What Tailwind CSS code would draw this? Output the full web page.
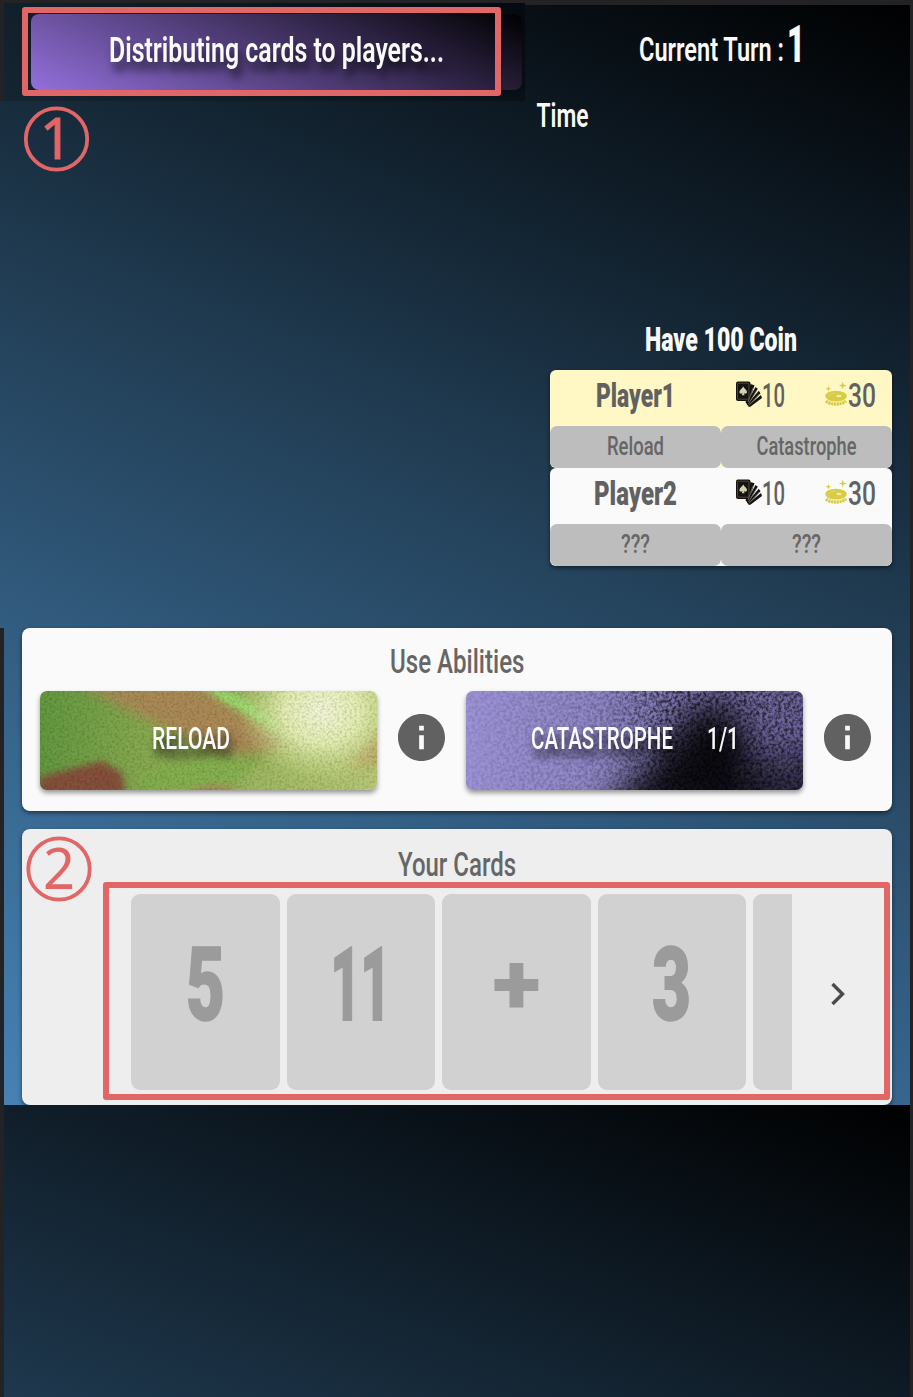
<!DOCTYPE html>
<html lang="en">
<head>
<meta charset="utf-8">
<title>Card Game</title>
<script src="https://cdn.jsdelivr.net/npm/@tailwindcss/browser@4"></script>
</head>
<body class="bg-[#232325] font-['Roboto',sans-serif]">
<svg class="hidden">
  <symbol id="cards" viewBox="0 0 26 26">
    <g fill="#15130f">
      <path d="M14.500 3l4 1.200L12 23.500 9.500 21.500z"/>
      <path d="M19.500 6l2.300 1.700L11.800 24.300 10.500 22.500z"/>
      <path d="M22.800 9.700l1.700 2.500L12.500 25l-1.500-1.500z"/>
      <path d="M25 14l1 3L14 26l-2.500-1z"/>
      <rect x="0" y=".5" width="14.500" height="19.500" rx="2"/>
    </g>
    <path d="M17 7l-5 14M20.600 9.500L12.500 23M23.300 13L13 24.300" stroke="#8d8878" stroke-width=".7" fill="none"/>
    <rect x="1.600" y="2.200" width="11.300" height="16" rx="1" fill="none" stroke="#6d6a60" stroke-width=".6"/>
    <path d="M7.200 5.500c1 2 3.800 3.300 3.800 5.500 0 1.700-2 2.200-3.200 1.100l.8 2.200H5.800l.8-2.200C5.400 13.200 3.400 12.700 3.400 11c0-2.200 2.800-3.500 3.800-5.500z" fill="#d6d0b4"/>
  </symbol>
  <symbol id="coin" viewBox="0 0 24 26">
    <g fill="#d8cb45">
      <path d="M18.500 0l.9 3.200 3.300 1-3.300 1-.9 3.300-.9-3.300-3.300-1 3.300-1z"/>
      <path d="M3.500 4.500l.7 2.300 2.300.7-2.300.7-.7 2.300-.7-2.300L.5 7.500l2.300-.7z"/>
      <ellipse cx="11.500" cy="15.200" rx="11.300" ry="5.600"/>
    </g>
    <path d="M1.200 20.300c4 4.200 16.600 4.200 20.600 0" fill="none" stroke="#d8cb45" stroke-width="3.400" stroke-dasharray="2.300 .6"/>
    <ellipse cx="14.500" cy="15.200" rx="2.800" ry="1.300" fill="#f3eca0"/>
    <path d="M4 15.500c0-2 3.500-3 6.500-3.200" fill="none" stroke="#e9df7c" stroke-width=".7"/>
  </symbol>
  <symbol id="info" viewBox="2 2 20 20">
    <path fill="#616161" d="M12 2C6.480 2 2 6.480 2 12s4.480 10 10 10 10-4.480 10-10S17.520 2 12 2zm1 15h-2v-6h2v6zm0-8h-2V7h2v2z"/>
  </symbol>
</svg>

<main class="relative flex h-[1397px] w-[913px] flex-col overflow-hidden">
  <div class="flex h-[1105px] shrink-0 flex-col bg-[linear-gradient(22deg,#4682b4,#346085_30%,#203b51_58%,#12222f_75%,#000)]">

    <section class="flex h-[628px] shrink-0">
      <div class="w-[525px]">
        <header class="h-[101px] border-t-[3px] border-l-4 border-[#232325] bg-[linear-gradient(30deg,#142532,#0f1c25_40%,#050910)] pt-[11px] pl-[27px]">
          <div class="h-[76px] w-[491px] rounded-[8px] bg-[linear-gradient(25deg,#9370db,#000)] shadow-md">
            <svg width="491" height="76" class="overflow-visible drop-shadow-[4px_9px_4px_rgba(0,0,0,.65)]">
              <text x="78" y="48" font-size="34.500" font-weight="600" fill="#fafafa" textLength="335" lengthAdjust="spacingAndGlyphs">Distributing cards to players...</text>
            </svg>
          </div>
        </header>
      </div>
      <div class="flex grow flex-col border-t-[5px] border-r-[3px] border-[#232325]">
        <svg width="385" height="365" class="shrink-0" fill="#fafafa">
          <text x="114" y="55.500" font-size="33" font-weight="600" textLength="145" lengthAdjust="spacingAndGlyphs">Current Turn :</text>
          <text x="262" y="56.500" font-size="52" font-weight="900" textLength="18" lengthAdjust="spacingAndGlyphs">1</text>
          <text x="11.500" y="122" font-size="33" font-weight="600" textLength="52" lengthAdjust="spacingAndGlyphs">Time</text>
          <text x="120" y="346" font-size="33.500" font-weight="900" textLength="152" lengthAdjust="spacingAndGlyphs">Have 100 Coin</text>
        </svg>
        <div class="ml-[25px] w-[342px] rounded-[6px] shadow-[0_2px_4px_rgba(0,0,0,.5)]">
          <div class="flex h-[98px] flex-col rounded-[6px] bg-[#fff8c4]">
            <div class="flex h-14 items-start">
              <svg width="186" height="56" fill="#616161"><text x="46" y="37" font-size="34" font-weight="900" textLength="79" lengthAdjust="spacingAndGlyphs">Player1</text></svg>
              <svg width="26" height="26" class="mt-[11px]"><use href="#cards"/></svg>
              <svg width="63" height="56" fill="#616161"><text x="0" y="37" font-size="33" font-weight="500" textLength="23" lengthAdjust="spacingAndGlyphs">10</text></svg>
              <svg width="23" height="26" class="mt-[11px]"><use href="#coin"/></svg>
              <svg width="44" height="56" fill="#616161"><text x="0" y="37" font-size="33" font-weight="500" textLength="28" lengthAdjust="spacingAndGlyphs">30</text></svg>
            </div>
            <div class="grid h-[41.500px] grid-cols-2">
              <svg width="171" height="42" class="rounded-[7px] bg-[#bdbdbd]" fill="#666"><text x="57" y="28.500" font-size="25" font-weight="500" textLength="57" lengthAdjust="spacingAndGlyphs">Reload</text></svg>
              <svg width="171" height="42" class="rounded-[7px] bg-[#bdbdbd]" fill="#666"><text x="35.500" y="28.500" font-size="25" font-weight="500" textLength="100" lengthAdjust="spacingAndGlyphs">Catastrophe</text></svg>
            </div>
          </div>
          <div class="flex h-[98px] flex-col rounded-[6px] bg-[#fafafa]">
            <div class="flex h-14 items-start">
              <svg width="186" height="56" fill="#616161"><text x="44" y="37" font-size="34" font-weight="900" textLength="83" lengthAdjust="spacingAndGlyphs">Player2</text></svg>
              <svg width="26" height="26" class="mt-[11px]"><use href="#cards"/></svg>
              <svg width="63" height="56" fill="#616161"><text x="0" y="37" font-size="33" font-weight="500" textLength="23" lengthAdjust="spacingAndGlyphs">10</text></svg>
              <svg width="23" height="26" class="mt-[11px]"><use href="#coin"/></svg>
              <svg width="44" height="56" fill="#616161"><text x="0" y="37" font-size="33" font-weight="500" textLength="28" lengthAdjust="spacingAndGlyphs">30</text></svg>
            </div>
            <div class="grid h-[42px] grid-cols-2">
              <svg width="171" height="42" class="rounded-[7px] bg-[#bdbdbd]" fill="#666"><text x="71" y="28.500" font-size="25" font-weight="500" textLength="29" lengthAdjust="spacingAndGlyphs">???</text></svg>
              <svg width="171" height="42" class="rounded-[7px] bg-[#bdbdbd]" fill="#666"><text x="71" y="28.500" font-size="25" font-weight="500" textLength="29" lengthAdjust="spacingAndGlyphs">???</text></svg>
            </div>
          </div>
        </div>
      </div>
    </section>

    <section class="flex h-[477px] shrink-0 flex-col border-r-[3px] border-l-4 border-[#232325] pl-[18px]">
      <div class="h-[183px] w-[870px] rounded-[8px] bg-[#fafafa] shadow-[0_2px_4px_rgba(0,0,0,.5)]">
        <svg width="870" height="63" fill="#666"><text x="368" y="45" font-size="33" font-weight="500" textLength="134.500" lengthAdjust="spacingAndGlyphs">Use Abilities</text></svg>
        <div class="flex items-start pl-[18px]">
          <svg width="337" height="99" class="rounded-[7px] shadow-[0_3px_5px_rgba(0,0,0,.4)]">
            <defs>
              <linearGradient id="g1"><stop offset="0" stop-color="#62983f"/><stop offset=".35" stop-color="#8cab52"/><stop offset="1" stop-color="#b8c877"/></linearGradient>
              <radialGradient id="g2"><stop offset="0" stop-color="#f3f6d8"/><stop offset=".45" stop-color="#e8f2b8" stop-opacity=".9"/><stop offset="1" stop-color="#c9df88" stop-opacity="0"/></radialGradient>
              <filter id="b6" x="-30%" y="-30%" width="160%" height="160%"><feGaussianBlur stdDeviation="6"/></filter>
              <filter id="b3" x="-30%" y="-30%" width="160%" height="160%"><feGaussianBlur stdDeviation="3.500"/></filter>
              <filter id="grain" x="0" y="0" width="100%" height="100%"><feTurbulence type="fractalNoise" baseFrequency=".4" numOctaves="2" seed="4"/><feColorMatrix values="0 0 0 0 0  0 0 0 0 0  0 0 0 0 0  1.600 0 0 0 -.65"/></filter>
            </defs>
            <rect width="337" height="99" fill="url(#g1)"/>
            <path d="M40-5H165L245 52 205 72 115 32z" fill="#ad8656" opacity=".9" filter="url(#b6)"/>
            <path d="M0 86L62 70 82 82 86 104H-5z" fill="#85503a" filter="url(#b3)"/>
            <path d="M100 85Q160 60 230 62L190 99H100z" fill="#7fb04c" opacity=".7" filter="url(#b6)"/>
            <path d="M145 105Q170 85 200 100z" fill="#a78a58" filter="url(#b3)"/>
            <path d="M310 75Q325 45 345 38V70z" fill="#b99f62" filter="url(#b6)"/>
            <path d="M168-4Q205 8 236 36L215 24 185 8z" fill="#94e66c" stroke="#9add6e" stroke-width="5" filter="url(#b3)"/>
            <ellipse cx="282" cy="20" rx="85" ry="72" fill="url(#g2)"/>
            <rect width="337" height="99" filter="url(#grain)" opacity=".24"/>
            <text x="112" y="58" font-size="31" font-weight="500" fill="#fafafa" textLength="78" lengthAdjust="spacingAndGlyphs" class="drop-shadow-[3px_8px_4px_rgba(0,0,0,.8)]">RELOAD</text>
          </svg>
          <svg width="47" height="47" class="mt-[23px] ml-[21px]"><use href="#info"/></svg>
          <svg width="337" height="99" class="ml-[21px] rounded-[7px] shadow-[0_3px_5px_rgba(0,0,0,.4)]">
            <defs>
              <linearGradient id="p1"><stop offset="0" stop-color="#9c92d6"/><stop offset=".35" stop-color="#9088c8"/><stop offset=".6" stop-color="#8078b4"/><stop offset="1" stop-color="#6c639a"/></linearGradient>
              <filter id="grain2" x="0" y="0" width="100%" height="100%"><feTurbulence type="fractalNoise" baseFrequency=".32" numOctaves="3" seed="9"/><feColorMatrix values="0 0 0 0 0  0 0 0 0 0  0 0 0 0 0  2.600 0 0 0 -.95"/></filter>
              <filter id="b14" filterUnits="userSpaceOnUse" x="-60" y="-80" width="500" height="280"><feGaussianBlur stdDeviation="17"/></filter>
              <linearGradient id="fade"><stop offset="0" stop-color="#fff" stop-opacity=".1"/><stop offset=".4" stop-color="#fff" stop-opacity=".25"/><stop offset=".6" stop-color="#fff" stop-opacity=".7"/><stop offset="1" stop-color="#fff" stop-opacity=".6"/></linearGradient>
              <mask id="m1"><rect width="337" height="99" fill="url(#fade)"/></mask>
            </defs>
            <rect width="337" height="99" fill="url(#p1)"/>
            <path d="M130 125L185 75 228 15 268 15 284 60 300 125z" fill="#000" opacity=".88" filter="url(#b14)"/>
            <path d="M265 130V75L380 60V130z" fill="#0a0718" opacity=".65" filter="url(#b14)"/>
            <g mask="url(#m1)"><rect width="337" height="99" filter="url(#grain2)"/></g>
            <g font-size="31" font-weight="500" fill="#fafafa" class="drop-shadow-[3px_8px_4px_rgba(0,0,0,.8)]">
              <text x="65" y="58" textLength="142" lengthAdjust="spacingAndGlyphs">CATASTROPHE</text>
              <text x="241" y="58" textLength="32" lengthAdjust="spacingAndGlyphs">1/1</text>
            </g>
          </svg>
          <svg width="47" height="47" class="mt-[23px] ml-[21px]"><use href="#info"/></svg>
        </div>
      </div>

      <div class="mt-[18px] h-[276px] w-[870px] rounded-[8px] bg-[#eeeeee] shadow-[0_2px_4px_rgba(0,0,0,.5)]">
        <svg width="870" height="65" fill="#666"><text x="376" y="46.500" font-size="33" font-weight="500" textLength="118" lengthAdjust="spacingAndGlyphs">Your Cards</text></svg>
        <div class="flex items-center pl-[109px]">
          <div class="flex h-[196px] w-[660.500px] gap-[7px] overflow-hidden">
            <svg width="148.500" height="196" class="shrink-0 rounded-[9px] bg-[#d1d1d1]" fill="#9b9b9b" stroke="#9b9b9b" stroke-width="1.500"><text x="55" y="126" font-size="102" font-weight="900" textLength="39" lengthAdjust="spacingAndGlyphs">5</text></svg>
            <svg width="148.500" height="196" class="shrink-0 rounded-[9px] bg-[#d1d1d1]" fill="#9b9b9b" stroke="#9b9b9b" stroke-width="2"><text x="43.500" y="126" font-size="102" font-weight="900" textLength="60" lengthAdjust="spacingAndGlyphs">11</text></svg>
            <svg width="148.500" height="196" class="shrink-0 rounded-[9px] bg-[#d1d1d1]" fill="#9b9b9b"><text x="50.500" y="118.500" font-size="86" font-weight="900" textLength="48" lengthAdjust="spacingAndGlyphs">+</text></svg>
            <svg width="148.500" height="196" class="shrink-0 rounded-[9px] bg-[#d1d1d1]" fill="#9b9b9b" stroke="#9b9b9b" stroke-width="1.500"><text x="54" y="126" font-size="102" font-weight="900" textLength="39" lengthAdjust="spacingAndGlyphs">3</text></svg>
            <div class="w-[148px] shrink-0 rounded-[9px] bg-[#d1d1d1]"></div>
          </div>
          <svg width="16" height="24" class="mt-1 ml-[38px]" fill="none" stroke="#4a4a4a" stroke-width="3.400"><path d="M2.500 2l10 10-10 10"/></svg>
        </div>
      </div>
    </section>
  </div>

  <div class="grow border-r-[3px] border-l-4 border-[#232325] bg-[linear-gradient(20deg,#4682b4,#000)] bg-[length:906px_1100px] bg-no-repeat"></div>

  <!-- numbered callouts -->
  <div class="absolute top-[7px] left-[22px] h-[89px] w-[479px] rounded-[3px] border-[6px] border-[#e36666]"></div>
  <div class="absolute top-[882px] left-[103px] h-[218px] w-[787px] rounded-[3px] border-[6px] border-[#e36666]"></div>
  <svg class="absolute top-[105px] left-[22px]" width="70" height="70"><circle cx="34.500" cy="34" r="30.700" fill="none" stroke="#e36666" stroke-width="3.800"/><text x="18" y="54" font-size="56" fill="#e36666" font-family="Noto Sans" stroke="#e36666" stroke-width="1">1</text></svg>
  <svg class="absolute top-[835px] left-[24px]" width="70" height="70"><circle cx="35" cy="34" r="30.700" fill="none" stroke="#e36666" stroke-width="3.800"/><text x="19" y="54" font-size="56" fill="#e36666" font-family="Noto Sans">2</text></svg>
</main>
</body>
</html>
